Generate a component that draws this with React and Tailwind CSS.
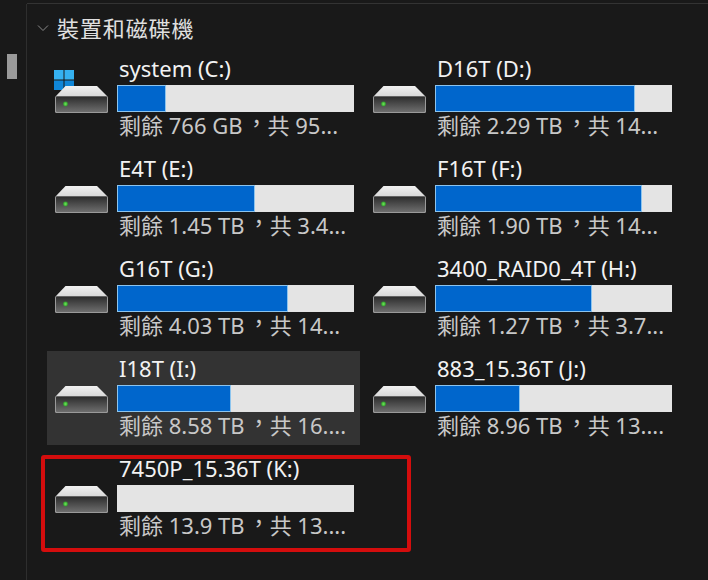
const DRIVES = [
  { name: "system (C:)", free: "剩餘 766 GB", total: "共 95...", pct: 20.6, windows: true },
  { name: "D16T (D:)", free: "剩餘 2.29 TB", total: "共 14...", pct: 84.2 },
  { name: "E4T (E:)", free: "剩餘 1.45 TB", total: "共 3.4...", pct: 58.1 },
  { name: "F16T (F:)", free: "剩餘 1.90 TB", total: "共 14...", pct: 87.2 },
  { name: "G16T (G:)", free: "剩餘 4.03 TB", total: "共 14...", pct: 72 },
  { name: "3400_RAID0_4T (H:)", free: "剩餘 1.27 TB", total: "共 3.7...", pct: 66.1 },
  { name: "I18T (I:)", free: "剩餘 8.58 TB", total: "共 16....", pct: 48, selected: true },
  { name: "883_15.36T (J:)", free: "剩餘 8.96 TB", total: "共 13....", pct: 35.7 },
  { name: "7450P_15.36T (K:)", free: "剩餘 13.9 TB", total: "共 13....", pct: 0, marked: true },
];

function DriveIcon({ windows }) {
  return (
    <svg width="56" height="50" viewBox="0 0 56 50" className="shrink-0">
      <defs>
        <linearGradient id="driveBody" x1="0" y1="0" x2="0" y2="1">
          <stop offset="0" stopColor="#2c2c2c" />
          <stop offset="1" stopColor="#6e6e6e" />
        </linearGradient>
        <linearGradient id="driveTop" x1="0" y1="0" x2="0" y2="1">
          <stop offset="0" stopColor="#f2f2f2" />
          <stop offset="1" stopColor="#d8d8d8" />
        </linearGradient>
        <radialGradient id="driveLed">
          <stop offset="0" stopColor="#6fe85a" />
          <stop offset="1" stopColor="#2f9a2a" />
        </radialGradient>
      </defs>
      {windows && (
        <g>
          <rect x="0" y="7" width="9.5" height="9.5" fill="#35b1f0" />
          <rect x="10.5" y="7" width="9.5" height="9.5" fill="#35b1f0" />
          <rect x="0" y="17.5" width="9.5" height="9.5" fill="#0f86d8" />
          <rect x="10.5" y="17.5" width="9.5" height="9.5" fill="#0f86d8" />
        </g>
      )}
      <path d="M11.5 23H43L53.5 33.5H1.5Z" fill="url(#driveTop)" />
      <rect x="1" y="33" width="53" height="17" rx="1.5" fill="#9a9a9a" />
      <rect x="2" y="33.5" width="51" height="15.5" rx="1" fill="url(#driveBody)" />
      <circle cx="11.5" cy="41" r="2.4" fill="url(#driveLed)" />
    </svg>
  );
}

function DriveTile({ drive }) {
  return (
    <div
      className={`relative flex h-[94px] w-[313px] items-start pl-[7px] ${
        drive.selected ? "bg-[#333333]" : ""
      }`}
    >
      <div className="mt-[12px]">
        <DriveIcon windows={drive.windows} />
      </div>
      <div className="ml-[7px] flex w-[237px] flex-col">
        <div className="ml-[2px] h-[34px] text-[22px] leading-[34px] whitespace-nowrap text-[#f2f2f2]">
          {drive.name}
        </div>
        <div className="h-[27px] w-[237px] bg-[#e4e4e4]">
          {drive.pct > 0 && (
            <div
              className="h-full border border-[#8cc4ee] bg-[#0066cc]"
              style={{ width: `${drive.pct}%` }}
            />
          )}
        </div>
        <div className="ml-[2px] text-[22px] leading-[27px] whitespace-nowrap text-[#c8c8c8]">
          {drive.free}
          {/* the installed CJK font sets this comma low, Windows centres it */}
          <span className="ml-[3px] inline-block -translate-y-[3px]">，</span>
          {drive.total}
        </div>
      </div>
      {drive.marked && (
        <div className="absolute top-[4px] left-[-6px] h-[97px] w-[370px] rounded-[3px] border-[4px] border-[#d40d0d]" />
      )}
    </div>
  );
}

export default function App() {
  return (
    <div lang="zh-TW" className="flex h-[580px] w-[708px] overflow-hidden bg-[#191919] font-['Noto_Sans','Noto_Sans_CJK_TC',sans-serif]">
      <div className="mt-[4px] w-[27px] shrink-0 border-r border-[#2e2e2e] pl-[7px] pt-[50px]">
        <div className="h-[25px] w-[10px] bg-[#9a9a9a]" />
      </div>
      <div className="flex min-w-0 flex-1 flex-col">
        <div className="h-[4px] shrink-0 border-b border-[#333333]" />
        <div className="flex h-[47px] shrink-0 items-center pl-[10px]">
          <svg width="12" height="8" viewBox="0 0 12 8" fill="none" stroke="#8a8a8a" strokeWidth="1">
            <path d="M1 1.5L6 6.5L11 1.5" />
          </svg>
          <span className="ml-[8px] mt-[2px] text-[22px] tracking-[0.9px] text-[#e0e0e0]">裝置和磁碟機</span>
        </div>
        <div className="grid grid-cols-[318px_318px] auto-rows-[100px] pl-[20px]">
          {DRIVES.map((drive) => (
            <DriveTile key={drive.name} drive={drive} />
          ))}
        </div>
      </div>
    </div>
  );
}
